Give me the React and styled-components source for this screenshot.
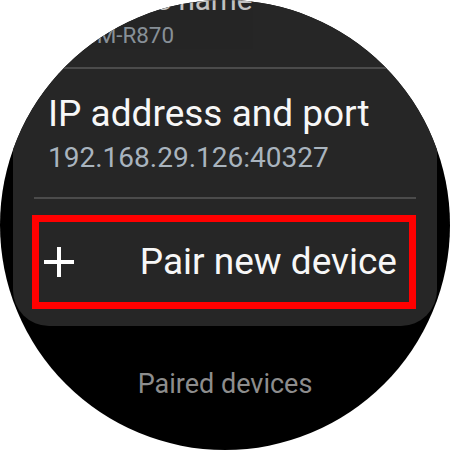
import React from 'react'
import styled, { createGlobalStyle } from 'styled-components'

const GlobalStyle = createGlobalStyle`
    body {
        margin: 0;
        background: #fff;
        font-family: Roboto, "Noto Sans", sans-serif;
    }
`

const Watch = styled.div`
    width: 450px;
    height: 450px;
    border-radius: 50%;
    overflow: hidden;
    background: #000;
    display: flex;
    flex-direction: column;
`

const Card = styled.div`
    margin: -61px 13px 0 13px;
    padding-bottom: 17px;
    background: #262626;
    border-radius: 0 0 36px 36px;
    display: flex;
    flex-direction: column;
`

const Item = styled.div`
    padding: 23px 35px 22px 35px;
    display: flex;
    flex-direction: column;
    transform: scale(${p => p.$scale || 1});
    transform-origin: center bottom;
    opacity: ${p => p.$fade || 1};
`

const Title = styled.div`
    font-size: 37px;
    line-height: 44px;
    color: #f7f7f7;
    white-space: nowrap;
`

const Sub = styled.div`
    margin-top: 5px;
    font-size: 28px;
    line-height: 34px;
    color: #a9b4be;
    white-space: nowrap;
`

const Divider = styled.div`
    height: 2px;
    margin: 0 21px;
    background: #4b4b4b;
`

const Highlight = styled.div`
    margin: 16px 21px 0 19px;
    height: 80px;
    border: 7px solid #ff0000;
    display: flex;
    align-items: center;
    justify-content: space-between;
    padding: 0 12px 0 4px;
`

const Plus = styled.svg`
    width: 32px;
    height: 32px;
    flex-shrink: 0;
`

const Action = styled.span`
    font-size: 37px;
    line-height: 44px;
    color: #f7f7f7;
    white-space: nowrap;
`

const Section = styled.div`
    margin-top: 42px;
    text-align: center;
    font-size: 27px;
    line-height: 32px;
    color: #8d8d8d;
`

export default function App() {
    return (
        <>
            <GlobalStyle />
            <Watch>
                <Card>
                    <Item $scale={0.8} $fade={0.75}>
                        <Title>Device name</Title>
                        <Sub>SM-R870</Sub>
                    </Item>
                    <Divider />
                    <Item>
                        <Title>IP address and port</Title>
                        <Sub>192.168.29.126:40327</Sub>
                    </Item>
                    <Divider />
                    <Highlight>
                        <Plus viewBox="0 0 32 32">
                            <path d="M16 1v30M1 16h30" stroke="#fff" strokeWidth="4" fill="none" />
                        </Plus>
                        <Action>Pair new device</Action>
                    </Highlight>
                </Card>
                <Section>Paired devices</Section>
            </Watch>
        </>
    )
}
